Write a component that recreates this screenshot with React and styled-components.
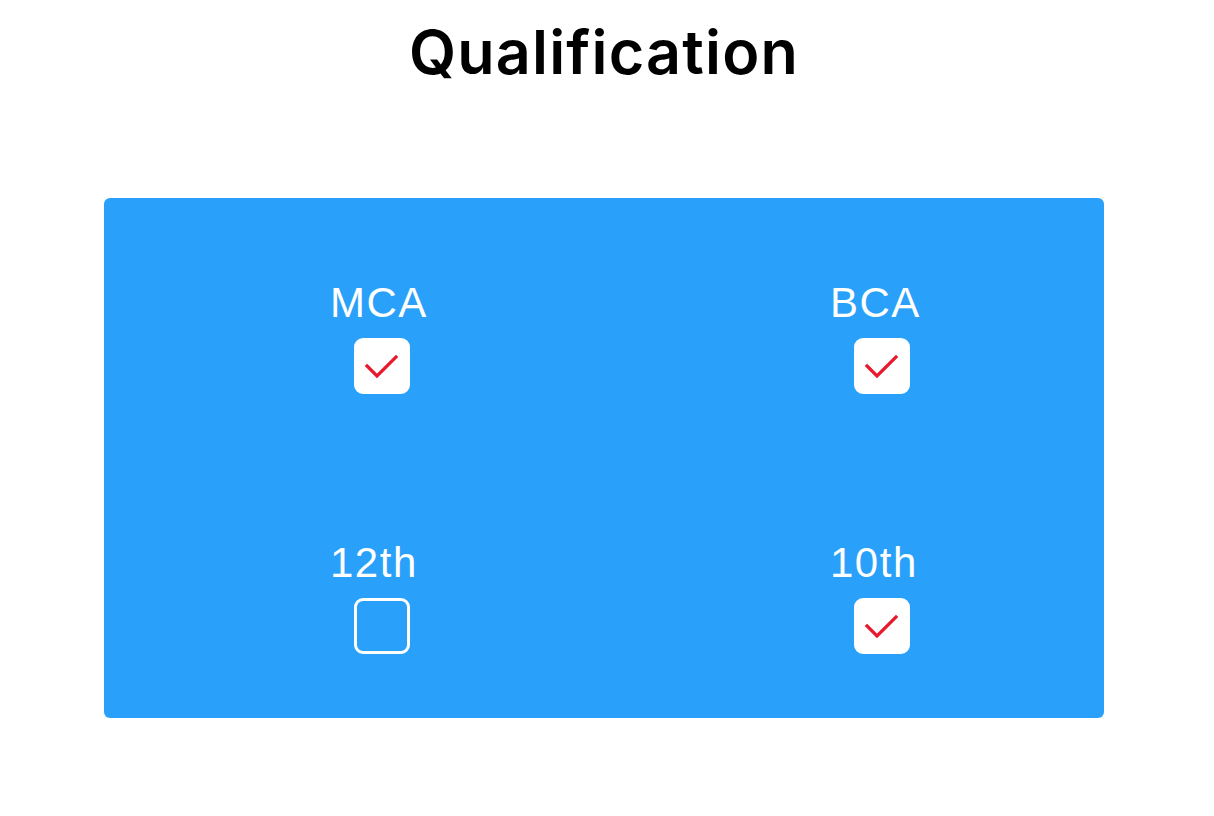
import React, { useState } from 'react';
import styled, { createGlobalStyle } from 'styled-components';

const GlobalStyle = createGlobalStyle`
  body {
    margin: 0;
    background: #ffffff;
    font-family: 'Liberation Sans', Arial, sans-serif;
  }
`;

const Page = styled.div`
  width: 1208px;
  display: flex;
  flex-direction: column;
  align-items: center;
  padding-top: 22px;
`;

const Title = styled.h1`
  margin: 0;
  font-family: Inter, 'Liberation Sans', sans-serif;
  font-weight: 600;
  font-size: 61px;
  line-height: 60px;
  letter-spacing: 1.2px;
  color: #000000;
`;

const Panel = styled.div`
  margin-top: 116px;
  width: 1000px;
  height: 520px;
  background: #29a0f9;
  border-radius: 6px;
  display: grid;
  grid-template-columns: 1fr 1fr;
  grid-template-rows: 260px 260px;
`;

const Option = styled.label`
  display: flex;
  flex-direction: column;
  align-items: flex-start;
  padding: 85px 0 0 226px;
  cursor: pointer;
`;

const Label = styled.span`
  font-size: 42px;
  line-height: 40px;
  letter-spacing: 1.5px;
  color: #ffffff;
`;

const Box = styled.span`
  margin: 15px 0 0 24px;
  width: 56px;
  height: 56px;
  box-sizing: border-box;
  border-radius: 9px;
  border: 3px solid #ffffff;
  background: ${p => (p.checked ? '#ffffff' : 'transparent')};
  display: flex;
  align-items: center;
  justify-content: center;
`;

const Check = () => (
  <svg width="56" height="56" viewBox="0 0 56 56" style={{ margin: -3 }}>
    <path d="M13 28 L23 38 L42 19" fill="none" stroke="#e8192d" strokeWidth="3.2" strokeLinecap="square" />
  </svg>
);

const initial = [
  { name: 'MCA', checked: true },
  { name: 'BCA', checked: true },
  { name: '12th', checked: false },
  { name: '10th', checked: true },
];

const App = () => {
  const [items, setItems] = useState(initial);

  const toggle = idx => {
    setItems(items.map((it, i) => (i === idx ? { ...it, checked: !it.checked } : it)));
  };

  return (
    <Page>
      <GlobalStyle />
      <Title>Qualification</Title>
      <Panel>
        {items.map((item, idx) => (
          <Option key={item.name} onClick={() => toggle(idx)}>
            <Label>{item.name}</Label>
            <Box checked={item.checked}>{item.checked && <Check />}</Box>
          </Option>
        ))}
      </Panel>
    </Page>
  );
};

export default App;
